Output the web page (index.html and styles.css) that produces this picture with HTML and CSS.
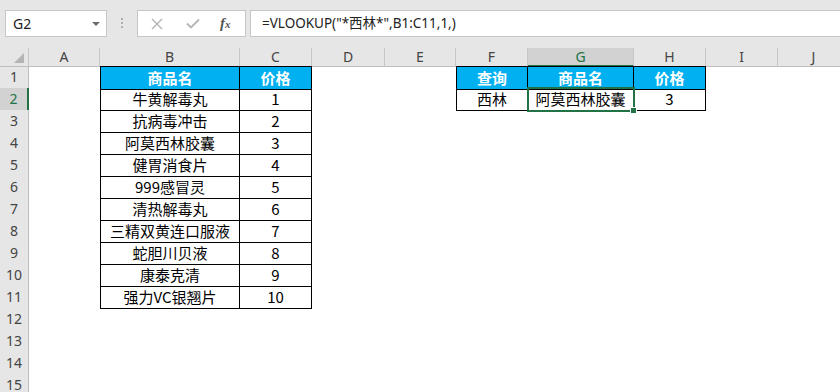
FILE: index.html
```html
<!DOCTYPE html>
<html lang="zh-CN">
<head>
  <meta charset="UTF-8">
  <title>VLOOKUP 通配符查询</title>
  <meta name="viewport" content="width=device-width, initial-scale=1">
  <link rel="stylesheet" href="styles.css">
</head>
<body>
  <div class="bar">
    <div class="namebox">G2<span class="arrow"></span></div>
    <div class="grip"><i></i><i></i><i></i></div>
    <div class="fxbox">
      <svg class="icon" width="12" height="12" viewBox="0 0 12 12"><path d="M1 1L11 11M11 1L1 11" stroke="#b4b4b4" stroke-width="1.4" fill="none"/></svg>
      <svg class="icon" width="14" height="11" viewBox="0 0 14 11"><path d="M1 5.5L5 9.5L13 1.5" stroke="#b4b4b4" stroke-width="1.8" fill="none"/></svg>
      <span class="fx">f<span class="sub">x</span></span>
    </div>
    <div class="formula">=VLOOKUP("*西林*",B1:C11,1,)</div>
  </div>

  <div class="sheet">
    <div class="row head">
      <div class="corner"><span class="tri"></span></div>
      <div class="ch">A</div><div class="ch">B</div><div class="ch">C</div><div class="ch">D</div><div class="ch">E</div>
      <div class="ch">F</div><div class="ch active">G</div><div class="ch">H</div><div class="ch">I</div><div class="ch">J</div>
    </div>

    <div class="row">
      <div class="rh">1</div><div></div>
      <div class="tb tl tt hd">商品名</div><div class="tb tt hd">价格</div>
      <div></div><div></div>
      <div class="tb tl tt hd">查询</div><div class="tb tt hd">商品名</div><div class="tb tt hd">价格</div>
      <div></div><div></div>
    </div>
    <div class="row">
      <div class="rh active">2</div><div></div>
      <div class="tb tl">牛黄解毒丸</div><div class="tb">1</div>
      <div></div><div></div>
      <div class="tb tl">西林</div><div class="tb sel">阿莫西林胶囊</div><div class="tb">3</div>
      <div></div><div></div>
    </div>
    <div class="row">
      <div class="rh">3</div><div></div>
      <div class="tb tl">抗病毒冲击</div><div class="tb">2</div>
      <div></div><div></div><div></div><div></div><div></div><div></div><div></div>
    </div>
    <div class="row">
      <div class="rh">4</div><div></div>
      <div class="tb tl">阿莫西林胶囊</div><div class="tb">3</div>
      <div></div><div></div><div></div><div></div><div></div><div></div><div></div>
    </div>
    <div class="row">
      <div class="rh">5</div><div></div>
      <div class="tb tl">健胃消食片</div><div class="tb">4</div>
      <div></div><div></div><div></div><div></div><div></div><div></div><div></div>
    </div>
    <div class="row">
      <div class="rh">6</div><div></div>
      <div class="tb tl">999感冒灵</div><div class="tb">5</div>
      <div></div><div></div><div></div><div></div><div></div><div></div><div></div>
    </div>
    <div class="row">
      <div class="rh">7</div><div></div>
      <div class="tb tl">清热解毒丸</div><div class="tb">6</div>
      <div></div><div></div><div></div><div></div><div></div><div></div><div></div>
    </div>
    <div class="row">
      <div class="rh">8</div><div></div>
      <div class="tb tl">三精双黄连口服液</div><div class="tb">7</div>
      <div></div><div></div><div></div><div></div><div></div><div></div><div></div>
    </div>
    <div class="row">
      <div class="rh">9</div><div></div>
      <div class="tb tl">蛇胆川贝液</div><div class="tb">8</div>
      <div></div><div></div><div></div><div></div><div></div><div></div><div></div>
    </div>
    <div class="row">
      <div class="rh">10</div><div></div>
      <div class="tb tl">康泰克清</div><div class="tb">9</div>
      <div></div><div></div><div></div><div></div><div></div><div></div><div></div>
    </div>
    <div class="row">
      <div class="rh">11</div><div></div>
      <div class="tb tl">强力VC银翘片</div><div class="tb">10</div>
      <div></div><div></div><div></div><div></div><div></div><div></div><div></div>
    </div>
    <div class="row"><div class="rh">12</div></div>
    <div class="row"><div class="rh">13</div></div>
    <div class="row"><div class="rh">14</div></div>
    <div class="row"><div class="rh">15</div></div>
  </div>
</body>
</html>
```

FILE: styles.css
```css
body {
  margin: 0;
  width: 840px;
  height: 392px;
  overflow: hidden;
  background: #fff;
  font-family: "Noto Sans CJK SC", sans-serif;
}

/* formula bar */
.bar {
  display: flex;
  height: 48px;
  box-sizing: border-box;
  padding: 10px 0 11px 5px;
  background: #e6e6e6;
  font-family: "Noto Sans", "Noto Sans CJK SC", sans-serif;
  font-size: 14px;
  color: #222;
}
.namebox, .fxbox, .formula {
  background: #fff;
  border: 1px solid #c6c6c6;
  box-sizing: border-box;
}
.namebox {
  position: relative;
  width: 102px;
  padding-left: 7px;
  line-height: 25px;
}
.arrow {
  position: absolute;
  right: 6px;
  top: 11px;
  border-left: 4px solid transparent;
  border-right: 4px solid transparent;
  border-top: 4px solid #6d6d6d;
}
.grip {
  width: 30px;
  display: flex;
  flex-direction: column;
  align-items: center;
  gap: 2px;
  padding-top: 8px;
}
.grip i {
  width: 2px;
  height: 2px;
  background: #b0b0b0;
}
.fxbox {
  width: 109px;
  display: flex;
  align-items: center;
  padding-left: 13px;
  gap: 23px;
}
.fx {
  font-family: "Liberation Serif", serif;
  font-style: italic;
  font-weight: bold;
  font-size: 15px;
  color: #555;
  margin-left: -3px;
}
.fx .sub {
  font-size: 11px;
}
.formula {
  flex: 1;
  margin-left: 4px;
  margin-right: -2px;
  padding-left: 11px;
  font-size: 13.5px;
  line-height: 25px;
}

/* grid */
.row {
  display: grid;
  grid-template-columns: 29px 71px 140px 72px 73px 71px 72px 106px 72px 72px 72px;
  height: 22px;
  font-size: 15px;
  line-height: 22px;
  text-align: center;
  color: #000;
}
.row > div {
  box-sizing: border-box;
}
.head {
  height: 18px;
  line-height: 17px;
  background: #e6e6e6;
}
.corner {
  position: relative;
  border-right: 1px solid #c6c6c6;
  border-bottom: 1px solid #bdbdbd;
}
.tri {
  position: absolute;
  right: 4px;
  bottom: 3px;
  border-left: 10px solid transparent;
  border-bottom: 10px solid #b4b4b4;
}
.ch {
  font-family: "Noto Sans", sans-serif;
  font-size: 14px;
  color: #444;
  border-right: 1px solid #c6c6c6;
  border-bottom: 1px solid #bdbdbd;
}
.ch.active {
  background: #d2d2d2;
  color: #217346;
  border-bottom: 2px solid #217346;
}
.rh {
  font-family: "Noto Sans", sans-serif;
  font-size: 14px;
  color: #444;
  background: #e6e6e6;
  border-right: 1px solid #bdbdbd;
  border-bottom: 1px solid #c6c6c6;
}
.rh.active {
  background: #d2d2d2;
  color: #217346;
  border-right: 2px solid #217346;
}

/* bordered table cells */
.tb {
  border-right: 1px solid #000;
  border-bottom: 1px solid #000;
}
.tl { border-left: 1px solid #000; }
.tt { border-top: 1px solid #000; }
.hd {
  background: #00b0f0;
  color: #fff;
  font-weight: bold;
}
.sel {
  position: relative;
  z-index: 1;
  outline: 2px solid #217346;
  outline-offset: -1px;
}
.sel::after {
  content: "";
  position: absolute;
  right: -4px;
  bottom: -4px;
  width: 5px;
  height: 5px;
  background: #217346;
  border: 1px solid #fff;
}
```
